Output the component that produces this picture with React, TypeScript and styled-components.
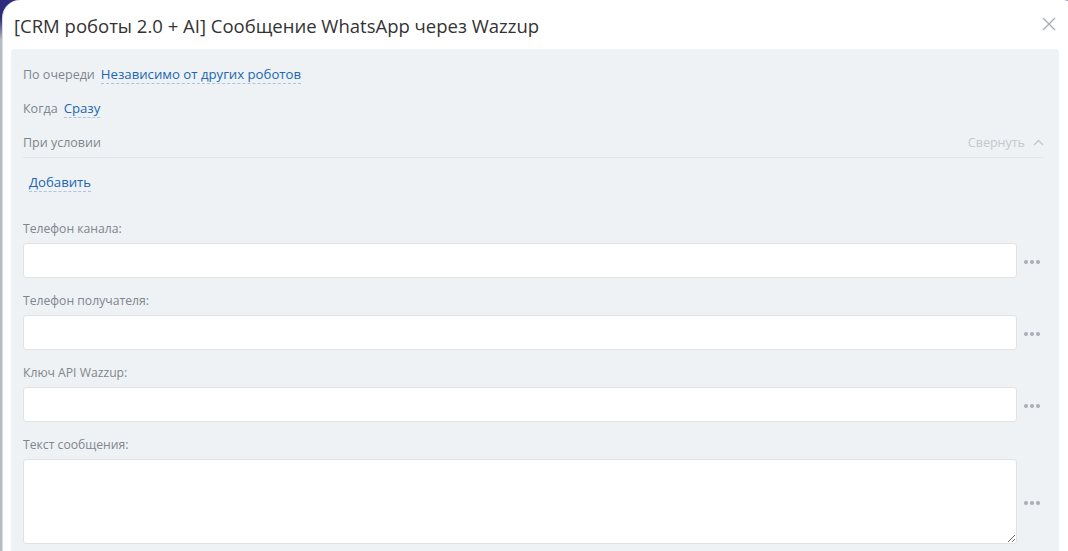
import React from "react";
import styled, { createGlobalStyle } from "styled-components";

const Global = createGlobalStyle`
  html, body { margin: 0; padding: 0; height: 100%; overflow: hidden; }
  body {
    background: linear-gradient(to bottom, #2e2b7c 0px, #2e2b7c 18px, #b9bcc3 40px, #b9bcc3 100%);
    font-family: "Open Sans", "Liberation Sans", sans-serif;
  }
`;

const Modal = styled.div`
  margin-left: 2px;
  width: 1080px;
  height: 560px;
  background: #fff;
  border-radius: 18px 18px 0 0;
  border-left: 1px solid #d9dce0;
  box-sizing: border-box;
  padding: 0 0 0 8px;
  display: flex;
  flex-direction: column;
`;

const Header = styled.div`
  height: 49px;
  display: flex;
  align-items: center;
  position: relative;
  padding-left: 3px;
  padding-top: 1px;
  box-sizing: border-box;
  width: 1050px;
`;

const Title = styled.h1`
  margin: 0;
  font-family: "Open Sans", "Liberation Sans", sans-serif;
  font-weight: 400;
  font-size: 18.5px;
  color: #333;
`;

const Close = styled.button`
  position: absolute;
  right: 4px;
  top: 16px;
  width: 16px;
  height: 16px;
  padding: 0;
  border: 0;
  background: none;
  cursor: pointer;
`;

const Panel = styled.div`
  width: 1048px;
  flex: 1;
  background: #eef2f4;
  border-radius: 4px 4px 0 0;
  padding: 8px 13px 0 12px;
  box-sizing: border-box;
  display: flex;
  flex-direction: column;
`;

const Row = styled.div`
  height: 34px;
  display: flex;
  align-items: center;
  gap: 6px;
`;

const CondRow = styled(Row)`
  justify-content: space-between;
  border-bottom: 1px solid #e2e6e9;
  height: 33px;
  padding-top: 3px;
  box-sizing: border-box;
  margin-right: 2px;
`;

const Label = styled.span`
  color: #80868e;
  font-size: 12.5px;
`;

const Link = styled.span`
  color: #2067b0;
  font-size: 13.2px;
  border-bottom: 1px dashed #a8c4e0;
  line-height: 18px;
  cursor: pointer;
`;

const Collapse = styled.span`
  display: flex;
  align-items: center;
  gap: 8px;
  color: #c3c9ce;
  font-size: 12.5px;
`;

const AddWrap = styled.div`
  padding: 15px 0 0 6px;
  height: 36px;
  box-sizing: border-box;
  display: flex;
  align-items: flex-start;
`;

const Fields = styled.div`
  padding-top: 26px;
  display: flex;
  flex-direction: column;
`;

const Field = styled.div`
  display: flex;
  flex-direction: column;
  margin-bottom: 14px;
`;

const FieldLabel = styled.label`
  font-size: 12.2px;
  color: #80868e;
  line-height: 17px;
  margin-bottom: 6px;
`;

const InputRow = styled.div`
  display: flex;
  align-items: center;
`;

const Input = styled.input`
  width: 994px;
  height: 35px;
  box-sizing: border-box;
  border: 1px solid #dfe3e6;
  border-radius: 3px;
  background: #fff;
  outline: none;
  font-family: inherit;
`;

const TextArea = styled.textarea`
  width: 994px;
  height: 85px;
  box-sizing: border-box;
  border: 1px solid #dfe3e6;
  border-radius: 3px;
  background: #fff;
  outline: none;
  resize: vertical;
  font-family: inherit;
`;

const Dots = styled.span`
  display: flex;
  gap: 2px;
  margin-left: 7px;
  margin-top: 2px;
`;

const Dot = styled.i`
  width: 4px;
  height: 4px;
  border-radius: 50%;
  background: #a9aeb4;
`;

const More = () => (
  <Dots>
    <Dot />
    <Dot />
    <Dot />
  </Dots>
);

const fields = ["Телефон канала:", "Телефон получателя:", "Ключ API Wazzup:"];

export default function App() {
  return (
    <>
      <Global />
      <Modal>
        <Header>
          <Title>[CRM роботы 2.0 + AI] Сообщение WhatsApp через Wazzup</Title>
          <Close aria-label="close">
            <svg width="16" height="16" viewBox="0 0 16 16">
              <path d="M2 2 L14 14 M14 2 L2 14" stroke="#a6abb0" strokeWidth="1.3" />
            </svg>
          </Close>
        </Header>
        <Panel>
          <Row>
            <Label>По очереди</Label>
            <Link>Независимо от других роботов</Link>
          </Row>
          <Row>
            <Label>Когда</Label>
            <Link>Сразу</Link>
          </Row>
          <CondRow>
            <Label>При условии</Label>
            <Collapse>
              Свернуть
              <svg width="11" height="7" viewBox="0 0 11 7">
                <path d="M1 6 L5.5 1.5 L10 6" fill="none" stroke="#c3c9ce" strokeWidth="1.4" />
              </svg>
            </Collapse>
          </CondRow>
          <AddWrap>
            <Link>Добавить</Link>
          </AddWrap>
          <Fields>
            {fields.map((f) => (
              <Field key={f}>
                <FieldLabel>{f}</FieldLabel>
                <InputRow>
                  <Input />
                  <More />
                </InputRow>
              </Field>
            ))}
            <Field>
              <FieldLabel>Текст сообщения:</FieldLabel>
              <InputRow>
                <TextArea />
                <More />
              </InputRow>
            </Field>
          </Fields>
        </Panel>
      </Modal>
    </>
  );
}
